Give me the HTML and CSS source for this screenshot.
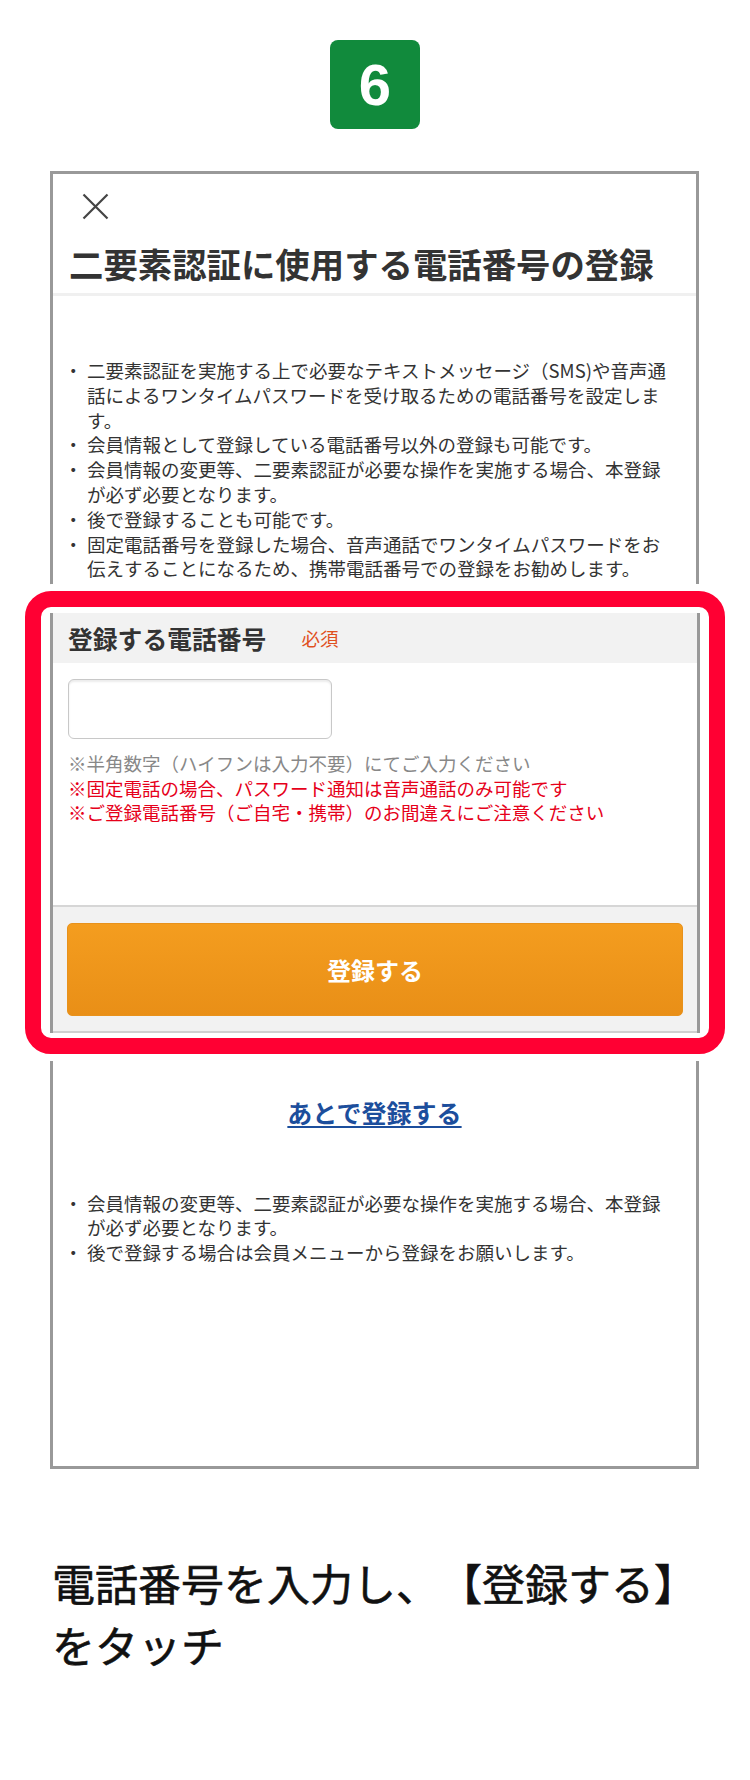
FILE: index.html
```html
<!DOCTYPE html>
<html lang="ja">
<head>
    <meta charset="UTF-8">
    <meta name="viewport" content="width=device-width, initial-scale=1.0">
    <title>二要素認証に使用する電話番号の登録</title>
    <link rel="stylesheet" href="styles.css">
</head>
<body>

<div class="step">
    <div class="step-badge">6</div>
</div>

<div class="phone">
    <div class="modal-head">
        <svg class="close-icon" width="27" height="27" viewBox="0 0 27 27">
            <path d="M1.5 1.5 L25.5 25.5 M25.5 1.5 L1.5 25.5" stroke="#444" stroke-width="2.2" fill="none"/>
        </svg>
        <h1 class="modal-title">二要素認証に使用する電話番号の登録</h1>
    </div>

    <ul class="notes notes-top">
        <li>二要素認証を実施する上で必要なテキストメッセージ（SMS)や音声通話によるワンタイムパスワードを受け取るための電話番号を設定します。</li>
        <li>会員情報として登録している電話番号以外の登録も可能です。</li>
        <li>会員情報の変更等、二要素認証が必要な操作を実施する場合、本登録が必ず必要となります。</li>
        <li>後で登録することも可能です。</li>
        <li>固定電話番号を登録した場合、音声通話でワンタイムパスワードをお伝えすることになるため、携帯電話番号での登録をお勧めします。</li>
    </ul>

    <!-- highlighted part of the screen -->
    <div class="highlight">
        <div class="form-box">
            <div class="form-label">
                登録する電話番号<span class="required">必須</span>
            </div>
            <div class="form-body">
                <input type="tel" class="tel-input" value="">
                <p class="hint">※半角数字（ハイフンは入力不要）にてご入力ください</p>
                <p class="warn">※固定電話の場合、パスワード通知は音声通話のみ可能です</p>
                <p class="warn">※ご登録電話番号（ご自宅・携帯）のお間違えにご注意ください</p>
            </div>
            <div class="form-foot">
                <button class="submit-btn">登録する</button>
            </div>
        </div>
    </div>

    <div class="later">
        <a href="#">あとで登録する</a>
    </div>

    <ul class="notes notes-bottom">
        <li>会員情報の変更等、二要素認証が必要な操作を実施する場合、本登録が必ず必要となります。</li>
        <li>後で登録する場合は会員メニューから登録をお願いします。</li>
    </ul>
</div>

<p class="caption">電話番号を入力し、【登録する】をタッチ</p>

</body>
</html>
```

FILE: styles.css
```css
body {
    font-family: "Noto Sans CJK JP", sans-serif;
    background-color: #fff;
    color: #333;
    margin: 0;
    padding: 0;
    text-spacing-trim: space-all;
}

/* Step number */
.step {
    display: flex;
    justify-content: center;
    padding-top: 40px;
}
.step-badge {
    width: 90px;
    height: 89px;
    background-color: #118a3c;
    border-radius: 8px;
    color: #fff;
    font-family: "Liberation Sans", Arial, sans-serif;
    font-weight: bold;
    font-size: 58px;
    line-height: 89px;
    text-align: center;
}

/* Phone screen */
.phone {
    box-sizing: border-box;
    width: 649px;
    margin: 42px 0 0 50px;
    border: 3px solid #999;
    padding-bottom: 201px;
}
.modal-head {
    padding: 19px 0 8px;
    border-bottom: 3px solid #f0f0f0;
}
.close-icon {
    display: block;
    margin-left: 29px;
}
.modal-title {
    margin: 21px 0 0 16px;
    font-size: 34.4px;
    line-height: 44px;
    font-weight: bold;
    color: #333;
    white-space: nowrap;
}

.notes {
    list-style: none;
    margin: 62px 24px 0 19px;
    padding: 0;
    font-size: 18.5px;
    line-height: 24.8px;
    color: #333;
}
.notes li {
    padding-left: 15px;
}
.notes li::before {
    content: "・";
    display: inline-block;
    width: 23px;
    margin-left: -23px;
}
.notes-bottom {
    margin-top: 62px;
}

/* Red annotation frame */
.highlight {
    margin: 10px -29px 0 -28px;
    padding: 6px 9px 5px;
    border: 16px solid #ff0033;
    border-radius: 26px;
    background-color: #fff;
    box-shadow: 0 0 0 7px #fff;
}
.form-box {
    border-left: 3px solid #999;
    border-right: 3px solid #999;
}
.form-label {
    display: flex;
    align-items: center;
    height: 50px;
    padding-left: 15px;
    background-color: #f2f2f2;
    font-size: 24.8px;
    font-weight: bold;
    color: #333;
}
.required {
    margin-left: 35px;
    font-size: 18.5px;
    font-weight: normal;
    color: #e0501e;
}
.form-body {
    padding: 16px 15px 80px;
}
.tel-input {
    display: block;
    box-sizing: border-box;
    width: 264px;
    height: 60px;
    margin: 0 0 12px;
    border: 1.5px solid #c8c8c8;
    border-radius: 6px;
    background-color: #fff;
    box-shadow: inset 0 2px 2px rgba(0, 0, 0, 0.08);
    -webkit-appearance: none;
}
.hint, .warn {
    margin: 0;
    font-size: 18.5px;
    line-height: 24.5px;
    white-space: nowrap;
}
.hint {
    color: #888;
}
.warn {
    color: #e6001a;
}
.form-foot {
    padding: 16px 14px 15px;
    background-color: #f2f2f2;
    border-top: 2px solid #d6d6d6;
    border-bottom: 2px solid #d0d0d0;
}
.submit-btn {
    display: block;
    width: 100%;
    height: 93px;
    border: 1px solid #e8921c;
    border-radius: 5px;
    background: linear-gradient(#f49d1f, #e98f17);
    color: #fff;
    font-family: inherit;
    font-size: 24px;
    font-weight: bold;
    cursor: pointer;
}

.later {
    margin-top: 41px;
    text-align: center;
    font-size: 25px;
    line-height: 34px;
    font-weight: bold;
}
.later a {
    color: #1c4e9c;
    text-decoration: underline;
    text-underline-offset: 3px;
}

/* Step caption */
.caption {
    margin: 82px 40px 0 52px;
    font-size: 43px;
    line-height: 62px;
    font-weight: 400;
    color: #111;
    -webkit-text-stroke: 0.6px #111;
}
```
